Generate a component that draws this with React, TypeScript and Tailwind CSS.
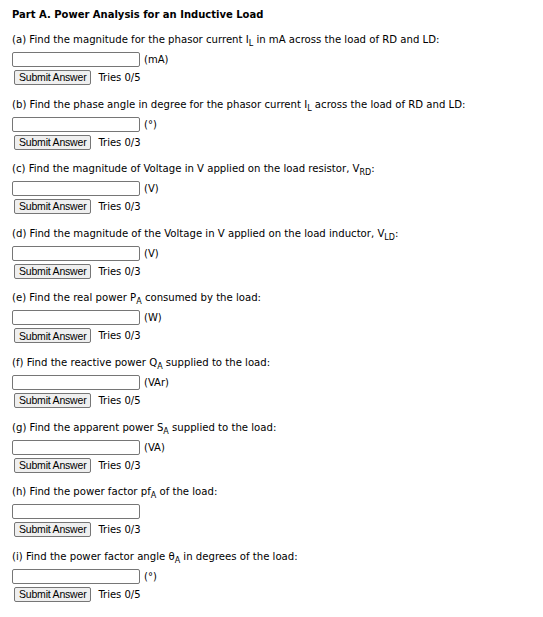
import React from 'react';

type Question = {
  label: string;
  text: React.ReactNode;
  unit: string;
  tries: string;
};

const Sub = ({ children }: { children: React.ReactNode }) => (
  <sub className="text-[8px] leading-none relative top-[3px]">{children}</sub>
);

const questions: Question[] = [
  {
    label: '(a)',
    text: (
      <>
        Find the magnitude for the phasor current I<Sub>L</Sub> in mA across the load of RD and LD:
      </>
    ),
    unit: '(mA)',
    tries: 'Tries 0/5',
  },
  {
    label: '(b)',
    text: (
      <>
        Find the phase angle in degree for the phasor current I<Sub>L</Sub> across the load of RD and LD:
      </>
    ),
    unit: '(°)',
    tries: 'Tries 0/3',
  },
  {
    label: '(c)',
    text: (
      <>
        Find the magnitude of Voltage in V applied on the load resistor, V<Sub>RD</Sub>:
      </>
    ),
    unit: '(V)',
    tries: 'Tries 0/3',
  },
  {
    label: '(d)',
    text: (
      <>
        Find the magnitude of the Voltage in V applied on the load inductor, V<Sub>LD</Sub>:
      </>
    ),
    unit: '(V)',
    tries: 'Tries 0/3',
  },
  {
    label: '(e)',
    text: (
      <>
        Find the real power P<Sub>A</Sub> consumed by the load:
      </>
    ),
    unit: '(W)',
    tries: 'Tries 0/3',
  },
  {
    label: '(f)',
    text: (
      <>
        Find the reactive power Q<Sub>A</Sub> supplied to the load:
      </>
    ),
    unit: '(VAr)',
    tries: 'Tries 0/5',
  },
  {
    label: '(g)',
    text: (
      <>
        Find the apparent power S<Sub>A</Sub> supplied to the load:
      </>
    ),
    unit: '(VA)',
    tries: 'Tries 0/3',
  },
  {
    label: '(h)',
    text: (
      <>
        Find the power factor pf<Sub>A</Sub> of the load:
      </>
    ),
    unit: '',
    tries: 'Tries 0/3',
  },
  {
    label: '(i)',
    text: (
      <>
        Find the power factor angle θ<Sub>A</Sub> in degrees of the load:
      </>
    ),
    unit: '(°)',
    tries: 'Tries 0/5',
  },
];

const QuestionBlock = ({ q }: { q: Question }) => (
  <div className="h-[64.6px]">
    <p className="h-[14px] leading-[14px] whitespace-nowrap text-[10.15px]">
      {q.label} {q.text}
    </p>
    <div className="flex items-center mt-[5px] h-[15px]">
      <input
        type="text"
        className="w-[128px] h-[15px] border border-[#767676] rounded-[2px] bg-white outline-none"
      />
      <span className="ml-[4px] leading-[15px]">{q.unit}</span>
    </div>
    <div className="flex items-center mt-[3px] ml-[2px] h-[15px]">
      <button className="h-[15px] px-[4px] border border-[#767676] rounded-[2px] bg-[#efefef] text-[10.5px] leading-none text-black font-['Liberation_Sans',Arial,sans-serif] tracking-[-0.2px]">
        Submit Answer
      </button>
      <span className="ml-[7px]">{q.tries}</span>
    </div>
  </div>
);

export default function App() {
  return (
    <div className="bg-white min-h-[617px] w-[543px] pl-[12px] pt-[8px] text-[10px] text-black font-['DejaVu_Sans',Verdana,sans-serif]">
      <h1 className="font-bold text-[10px] h-[14px] leading-[14px]">
        Part A. Power Analysis for an Inductive Load
      </h1>
      <div className="mt-[11px]">
        {questions.map((q) => (
          <QuestionBlock key={q.label} q={q} />
        ))}
      </div>
    </div>
  );
}
